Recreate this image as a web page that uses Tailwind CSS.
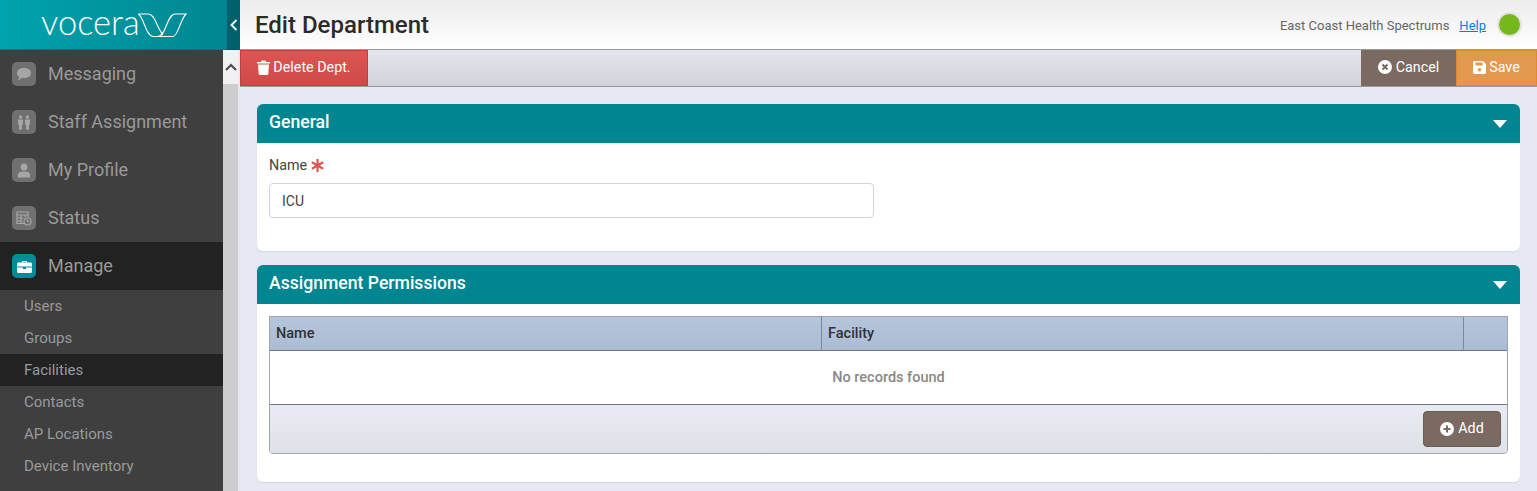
<!DOCTYPE html>
<html lang="en">
<head>
    <meta charset="UTF-8">
    <meta name="viewport" content="width=device-width, initial-scale=1.0">
    <title>Edit Department</title>
    <script src="https://cdn.jsdelivr.net/npm/@tailwindcss/browser@4"></script>
</head>
<body class="h-screen overflow-hidden flex bg-[#e6e9f2] font-['Roboto',sans-serif] text-[#333]">

<!-- left column -->
<div class="w-[240px] h-full flex flex-col shrink-0">
    <div class="h-[50px] flex shrink-0">
        <div class="w-[227px] bg-gradient-to-r from-[#00a3ad] to-[#008690] border-b border-[#007a85] flex items-center pl-[41px] text-white">
            <span class="font-['Lato',sans-serif] font-light text-[34.5px] leading-none w-[97px] mb-[4px]">vocera</span>
            <svg class="w-[49px] h-[26px] shrink-0" viewBox="0 0 49 26" fill="none" stroke="white" stroke-width="1.100">
                <path d="M.5 2 C6 6 8 24.500 15.500 24.500 H35 C40 24.500 42 8 48 2 H37 C29 2 28 24.500 20 24.500"/>
                <path d="M.5 2 H10 C17 2 18 14 25 23"/>
            </svg>
        </div>
        <div class="w-[13px] bg-[#00606b] flex items-center justify-center border-b border-[#005560]">
            <svg class="w-[8px] h-[12px]" viewBox="0 0 8 12" fill="none" stroke="#e6f2f3" stroke-width="2"><path d="M6.500 1 L1.500 6 L6.500 11"/></svg>
        </div>
    </div>
    <div class="flex-1 flex min-h-0">
        <nav class="w-[223px] bg-[#3f3f3f] text-[#9a9a9a] flex flex-col">
            <a class="h-[48px] shrink-0 flex items-center pl-[12px] gap-[12px] text-[18px]">
                <span class="w-[24px] h-[24px] rounded-[5px] bg-[#707070] flex items-center justify-center">
                    <svg class="w-[16px] h-[14px]" viewBox="0 0 16 14" fill="#a6a6a6"><path d="M8 1 C12 1 15 3 15 6 C15 9 12 11 8 11 C7.300 11 6.700 11 6 10.800 C5 12 3.500 12.800 1.800 13 C2.800 12 3.300 11 3.300 9.900 C1.800 9 1 7.600 1 6 C1 3 4 1 8 1 Z"/></svg>
                </span>
                <span class="mb-[2px]">Messaging</span>
            </a>
            <a class="h-[48px] shrink-0 flex items-center pl-[12px] gap-[12px] text-[18px]">
                <span class="w-[24px] h-[24px] rounded-[5px] bg-[#707070] flex items-center justify-center">
                    <svg class="w-[14px] h-[15px]" viewBox="0 0 14 15" fill="#a6a6a6">
                        <circle cx="3.500" cy="2" r="1.700"/><circle cx="10.500" cy="2" r="1.700"/>
                        <path d="M1 4.500 H6 V9.500 H5 V14.500 H2 V9.500 H1 Z"/><path d="M8 4.500 H13 V9.500 H12 V14.500 H9 V9.500 H8 Z"/>
                    </svg>
                </span>
                <span class="mb-[2px]">Staff Assignment</span>
            </a>
            <a class="h-[48px] shrink-0 flex items-center pl-[12px] gap-[12px] text-[18px]">
                <span class="w-[24px] h-[24px] rounded-[5px] bg-[#707070] flex items-center justify-center">
                    <svg class="w-[14px] h-[15px]" viewBox="0 0 14 15" fill="#a6a6a6"><circle cx="7" cy="4" r="3.500"/><path d="M1 14.500 V12 C1 9.500 3 8.500 7 8.500 C11 8.500 13 9.500 13 12 V14.500 Z"/></svg>
                </span>
                <span class="mb-[2px]">My Profile</span>
            </a>
            <a class="h-[48px] shrink-0 flex items-center pl-[12px] gap-[12px] text-[18px]">
                <span class="w-[24px] h-[24px] rounded-[5px] bg-[#707070] flex items-center justify-center">
                    <svg class="w-[16px] h-[15px]" viewBox="0 0 16 15" fill="none" stroke="#a6a6a6" stroke-width="1.200">
                        <path d="M8 12.500 H1 V1 H12 V6"/><path d="M1 4 H12 M1 7 H7 M1 10 H6 M5 4 V12 M9 4 V6" />
                        <circle cx="11.500" cy="10.500" r="3.500"/><path d="M11.500 8.500 V10.500 H13"/>
                    </svg>
                </span>
                <span class="mb-[2px]">Status</span>
            </a>
            <a class="h-[48px] shrink-0 flex items-center pl-[12px] gap-[12px] text-[18px] bg-[#222]">
                <span class="w-[24px] h-[24px] rounded-[5px] bg-[#008d98] flex items-center justify-center">
                    <svg class="w-[15px] h-[13px]" viewBox="0 0 15 13" fill="white"><path d="M5 2.500 V1 H10 V2.500 H13.500 C14.300 2.500 15 3.200 15 4 V6.500 H0 V4 C0 3.200 .7 2.500 1.500 2.500 Z M6 2.500 H9 V1.800 H6 Z"/><path d="M0 7.500 H6 V9 H9 V7.500 H15 V11.500 C15 12.300 14.300 13 13.500 13 H1.500 C.7 13 0 12.300 0 11.500 Z"/></svg>
                </span>
                <span class="mb-[2px]">Manage</span>
            </a>
            <a class="h-[32px] shrink-0 flex items-center pl-[24px] text-[15px]">Users</a>
            <a class="h-[32px] shrink-0 flex items-center pl-[24px] text-[15px]">Groups</a>
            <a class="h-[32px] shrink-0 flex items-center pl-[24px] text-[15px] bg-[#222]">Facilities</a>
            <a class="h-[32px] shrink-0 flex items-center pl-[24px] text-[15px]">Contacts</a>
            <a class="h-[32px] shrink-0 flex items-center pl-[24px] text-[15px]">AP Locations</a>
            <a class="h-[32px] shrink-0 flex items-center pl-[24px] text-[15px]">Device Inventory</a>
        </nav>
        <div class="w-[16px] bg-[#cdcdcd] border-r border-[#e6e9f2]">
            <div class="h-[34px] bg-[#f1f1f1] flex items-center justify-center">
                <svg class="w-[12px] h-[8px]" viewBox="0 0 12 8" fill="none" stroke="#505050" stroke-width="2.200"><path d="M1 7 L6 2 L11 7"/></svg>
            </div>
        </div>
    </div>
</div>

<!-- main -->
<div class="flex-1 min-w-0 flex flex-col">
    <header class="h-[49px] shrink-0 bg-gradient-to-b from-[#ececec] to-white flex items-center pl-[15px] pr-[15px]">
        <h1 class="text-[24px] font-medium text-[#2b2b2b]">Edit Department</h1>
        <span class="ml-auto text-[13px] text-[#666] pt-[2px]">East Coast Health Spectrums</span>
        <a class="ml-[10px] text-[13px] text-[#0a7de0] underline pt-[2px]">Help</a>
        <span class="ml-[11px] w-[25px] h-[25px] rounded-full bg-[#76b81c] border-[2px] border-[#e3e3e3]"></span>
    </header>

    <div class="h-[38px] shrink-0 flex bg-gradient-to-b from-[#e4e6ec] to-[#d1d4dc] border-y border-[#9a9a9a] text-white text-[14.3px]">
        <button class="w-[128px] bg-gradient-to-b from-[#dd5552] to-[#cf4a47] border border-[#c23f3c] flex items-center justify-center gap-[3px]">
            <svg class="w-[13px] h-[15px] mb-[2px]" viewBox="0 0 13 15" fill="white"><path d="M0 2 H4 L4.500 .5 H8.500 L9 2 H13 V3.500 H0 Z"/><path d="M1 4.500 H12 L11.300 14 C11.200 14.600 10.800 15 10.200 15 H2.800 C2.200 15 1.800 14.600 1.700 14 Z"/></svg>
            Delete Dept.
        </button>
        <button class="ml-auto w-[95px] bg-[#7a6a62] flex items-center justify-center gap-[4px]">
            <svg class="w-[14px] h-[14px] mb-[2px]" viewBox="0 0 14 14"><circle cx="7" cy="7" r="7" fill="white"/><path d="M4.500 4.500 L9.500 9.500 M9.500 4.500 L4.500 9.500" stroke="#7a6a62" stroke-width="2"/></svg>
            Cancel
        </button>
        <button class="w-[81px] bg-[#e2994f] border border-[#e08a30] flex items-center justify-center gap-[3px]">
            <svg class="w-[13px] h-[13px] mb-[2px]" viewBox="0 0 13 13"><path fill="white" d="M1.500 0 H10 L13 3 V11.500 C13 12.300 12.300 13 11.500 13 H1.500 C.7 13 0 12.300 0 11.500 V1.500 C0 .7 .7 0 1.500 0 Z"/><rect x="2.500" y="1.500" width="7" height="3" fill="#e2994f"/><circle cx="6.500" cy="8.700" r="1.800" fill="#e2994f"/></svg>
            Save
        </button>
    </div>

    <div class="flex-1 min-h-0 overflow-hidden pt-[17px] pl-[17px] pr-[17px] flex flex-col gap-[14px]">
        <section class="rounded-[6px] bg-white shadow-[0_1px_1px_#d5d7de] overflow-hidden shrink-0">
            <div class="h-[39px] bg-[#008691] flex items-center justify-between pl-[12px] pr-[13px] text-white">
                <h2 class="text-[17.6px] font-medium mb-[3px]">General</h2>
                <svg class="w-[14px] h-[8px]" viewBox="0 0 14 8" fill="white"><path d="M0 0 H14 L7 8 Z"/></svg>
            </div>
            <div class="h-[108px] px-[12px] pt-[13px]">
                <label class="flex items-center gap-[4px] text-[14.3px] leading-[18px] text-[#444]">
                    Name
                    <svg class="w-[13px] h-[13px]" viewBox="0 0 12 12" stroke="#dd5552" stroke-width="2"><path d="M6 0 V12 M.8 3 L11.200 9 M11.200 3 L.8 9"/></svg>
                </label>
                <input class="mt-[9px] block w-[605px] h-[35px] border border-[#d4d4d4] rounded-[4px] px-[12px] text-[14px] text-[#444]" value="ICU">
            </div>
        </section>

        <section class="rounded-[6px] bg-white shadow-[0_1px_1px_#d5d7de] overflow-hidden shrink-0">
            <div class="h-[39px] bg-[#008691] flex items-center justify-between pl-[12px] pr-[13px] text-white">
                <h2 class="text-[17.6px] font-medium mb-[3px]">Assignment Permissions</h2>
                <svg class="w-[14px] h-[8px]" viewBox="0 0 14 8" fill="white"><path d="M0 0 H14 L7 8 Z"/></svg>
            </div>
            <div class="h-[178px] px-[12px] pt-[12px]">
                <div class="border border-[#a0a4ae] rounded-b-[4px] overflow-hidden">
                    <div class="h-[35px] flex bg-gradient-to-b from-[#b6c5da] to-[#aabcd4] border-b border-[#6e7686] border-t border-t-[#6e7686] -mt-px text-[14.5px] font-medium text-[#2f3238]">
                        <div class="w-[552px] px-[6px] pt-[1px] flex items-center border-r border-[#7e8798]">Name</div>
                        <div class="flex-1 px-[6px] pt-[1px] flex items-center border-r border-[#7e8798]">Facility</div>
                        <div class="w-[43px]"></div>
                    </div>
                    <div class="h-[53px] pt-[1px] bg-white flex items-center justify-center text-[14.5px] font-medium text-[#888]">No records found</div>
                    <div class="h-[49px] bg-gradient-to-b from-[#e8ebf3] to-[#dfe2e9] border-t border-[#6e7686] flex items-center justify-end pr-[6px]">
                        <button class="w-[78px] h-[36px] rounded-[4px] bg-[#7a6a62] border border-[#6b5c55] text-white text-[14.3px] flex items-center justify-center gap-[4px]">
                            <svg class="w-[14px] h-[14px]" viewBox="0 0 14 14"><circle cx="7" cy="7" r="7" fill="white"/><path d="M7 3.500 V10.500 M3.500 7 H10.500" stroke="#7a6a62" stroke-width="2"/></svg>
                            Add
                        </button>
                    </div>
                </div>
            </div>
        </section>
    </div>
</div>
</body>
</html>
